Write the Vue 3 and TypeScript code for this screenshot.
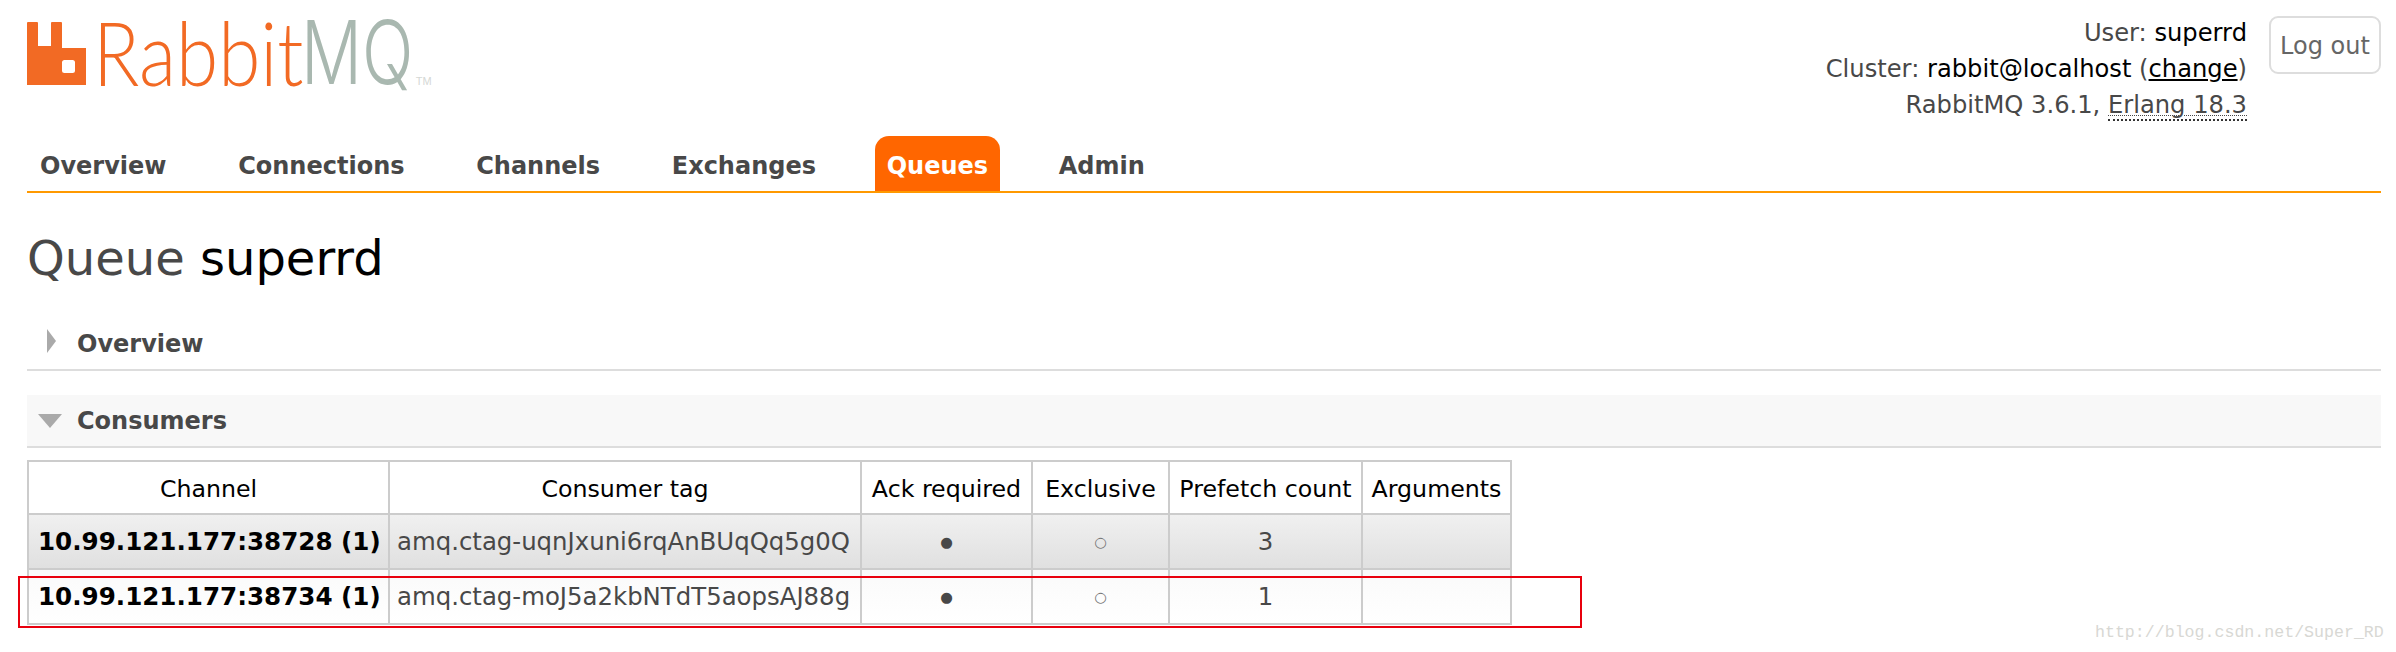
<script setup lang="ts">
interface Row { channel: string; tag: string; prefetch: number }
const navItems: string[] = ['Overview', 'Connections', 'Channels', 'Exchanges', 'Queues', 'Admin']
const columns: string[] = ['Channel', 'Consumer tag', 'Ack required', 'Exclusive', 'Prefetch count', 'Arguments']
const rows: Row[] = [
  { channel: '10.99.121.177:38728 (1)', tag: 'amq.ctag-uqnJxuni6rqAnBUqQq5g0Q', prefetch: 3 },
  { channel: '10.99.121.177:38734 (1)', tag: 'amq.ctag-moJ5a2kbNTdT5aopsAJ88g', prefetch: 1 }
]
</script>

<template>
  <div class="page">
    <header class="top">
      <div class="logo">
        <svg class="mark" width="60" height="64" viewBox="0 0 60 64">
          <path fill="#f26a24" fill-rule="evenodd" d="M0 1Q0 0 1 0H10Q11 0 11 1V24H24V1Q24 0 25 0H34Q35 0 35 1V26H59V63H0ZM37.500 38Q35 38 35 40.500V48.500Q35 51 37.500 51H45.500Q48 51 48 48.500V40.500Q48 38 45.500 38Z" />
        </svg>
        <span class="word rabbit">Rabbit</span>
        <span class="word mq">MQ</span>
        <span class="tm">TM</span>
      </div>
      <div class="account">
        <div class="info">
          <div>User: <b>superrd</b></div>
          <div>Cluster: <b>rabbit@localhost</b> (<a class="change">change</a>)</div>
          <div>RabbitMQ 3.6.1, <span class="erlang">Erlang 18.3</span></div>
        </div>
        <button class="logout" type="button">Log out</button>
      </div>
    </header>

    <nav class="nav">
      <a v-for="item in navItems" :key="item" class="nav-item" :class="{ active: item === 'Queues' }">{{ item }}</a>
    </nav>

    <h1 class="title">Queue <b>superrd</b></h1>

    <section class="section closed">
      <h2 class="section-head"><i class="tri-right"></i>Overview</h2>
    </section>

    <section class="section open">
      <h2 class="section-head"><i class="tri-down"></i>Consumers</h2>
    </section>

    <div class="table-wrap">
      <table class="list">
        <colgroup>
          <col class="c1" /><col class="c2" /><col class="c3" /><col class="c4" /><col class="c5" /><col class="c6" />
        </colgroup>
        <thead>
          <tr><th v-for="c in columns" :key="c">{{ c }}</th></tr>
        </thead>
        <tbody>
          <tr v-for="(r, i) in rows" :key="r.channel" :class="i === 0 ? 'alt1' : 'alt2'">
            <td class="chan">{{ r.channel }}</td>
            <td class="tag">{{ r.tag }}</td>
            <td class="mid dot">●</td>
            <td class="mid dot light">○</td>
            <td class="mid">{{ r.prefetch }}</td>
            <td></td>
          </tr>
        </tbody>
      </table>
      <div class="annotation"></div>
    </div>

    <div class="watermark">http://blog.csdn.net/Super_RD</div>
  </div>
</template>

<style>
html, body { background: #fff; }
</style>

<style scoped>
.page {
  position: relative;
  box-sizing: border-box;
  width: 2396px;
  height: 652px;
  padding: 0 15px 0 27px;
  overflow: hidden;
  font-family: "DejaVu Sans", Verdana, sans-serif;
  font-size: 24px;
  color: #484848;
  background: #fff;
}
.top {
  display: flex;
  justify-content: space-between;
  height: 136px;
}
.logo {
  position: relative;
  display: flex;
  align-items: flex-start;
  padding-top: 22px;
  height: 100px;
  box-sizing: border-box;
}
.mark { display: block; flex: none; }
.word {
  display: inline-block;
  flex: none;
  margin-top: -2px;
  font-family: Lato, sans-serif;
  font-weight: 300;
  font-size: 89px;
  line-height: 64px;
  transform-origin: left top;
  white-space: nowrap;
}
.rabbit { color: #f26a24; margin-left: 6px; margin-right: -37px; transform: scaleX(0.86); }
.mq {
  color: #a9b8b0;
  margin-right: -34px;
  font-family: Inter, sans-serif;
  font-size: 88px;
  transform: scaleX(0.77);
}
.tm {
  font-family: "Liberation Sans", sans-serif;
  font-size: 11px;
  color: #d5d8d5;
  margin-top: 53px;
  margin-left: 3px;
}
.account { display: flex; align-items: flex-start; }
.info {
  padding-top: 15px;
  text-align: right;
  line-height: 36px;
  font-size: 24.2px;
}
.info b { font-weight: 400; color: #000; }
.change { color: #000; text-decoration: underline; }
.erlang {
  border-bottom: 2px dotted #333;
  text-decoration: underline dotted 1px;
  text-underline-offset: 2px;
}
.logout {
  box-sizing: border-box;
  width: 112px;
  height: 58px;
  margin: 16px 0 0 22px;
  padding: 2px 0 0;
  background: #fff;
  border: 2px solid #ddd;
  border-radius: 9px;
  font: 400 24px "DejaVu Sans", sans-serif;
  color: #666;
}
.nav {
  display: flex;
  gap: 45.7px;
  height: 55px;
  border-bottom: 2px solid #f90;
}
.nav-item {
  padding: 5px 13px 0;
  font-weight: 700;
  font-size: 24px;
  line-height: 51px;
  color: #484848;
}
.nav-item.active {
  padding: 5px 12px 0;
  background: #f60;
  color: #fff;
  border-radius: 14px 14px 0 0;
}
.title {
  margin: 35px 0 0;
  font-weight: 400;
  font-size: 48px;
  line-height: 60px;
  color: #484848;
}
.title b { font-weight: 400; color: #000; }
.section { border-bottom: 2px solid #ddd; }
.section-head {
  display: flex;
  align-items: center;
  position: relative;
  margin: 0;
  padding-left: 50px;
  font-size: 24px;
  font-weight: 700;
  color: #484848;
}
.closed { margin-top: 31px; }
.closed .section-head { height: 50px; }
.open { margin-top: 24px; background: #f8f8f8; }
.open .section-head { height: 51px; }
.tri-right {
  position: absolute;
  left: 20px;
  top: 10px;
  border-left: 9px solid #aaa;
  border-top: 12px solid transparent;
  border-bottom: 12px solid transparent;
}
.tri-down {
  position: absolute;
  left: 11px;
  top: 19px;
  border-top: 14px solid #aaa;
  border-left: 12px solid transparent;
  border-right: 12px solid transparent;
}
.table-wrap { position: relative; margin-top: 12px; }
.list {
  table-layout: fixed;
  width: 1483px;
  border-collapse: collapse;
  font-size: 24.4px;
}
.c1 { width: 361px; }
.c2 { width: 472px; }
.c3 { width: 171px; }
.c4 { width: 137px; }
.c5 { width: 193px; }
.c6 { width: 149px; }
.list th, .list td {
  border: 2px solid #ccc;
  padding: 0;
  white-space: nowrap;
}
.list th {
  box-sizing: border-box;
  height: 53px;
  padding-top: 2px;
  font-weight: 400;
  font-size: 23.7px;
  color: #000;
  text-align: center;
  background: #fff;
}
.list td { height: 53px; }
.alt1 td { background: linear-gradient(#f0f0f0, #e0e0e0); }
.alt2 td { background: linear-gradient(#fafafa, #fff); }
.chan { font-weight: 700; font-size: 24.6px; color: #000; padding-left: 9px !important; }
.tag { padding-left: 7px !important; }
.mid { text-align: center; }
.dot { font-size: 14.5px; }
.light { color: #777; }
.annotation {
  position: absolute;
  left: -9px;
  top: 116px;
  width: 1564px;
  height: 52px;
  border: 2px solid #e8000d;
  box-sizing: border-box;
  pointer-events: none;
}
.watermark {
  position: absolute;
  left: 2095px;
  top: 623px;
  font-family: "Liberation Mono", monospace;
  font-size: 16.6px;
  line-height: 20px;
  color: #d8d8d4;
}
</style>
